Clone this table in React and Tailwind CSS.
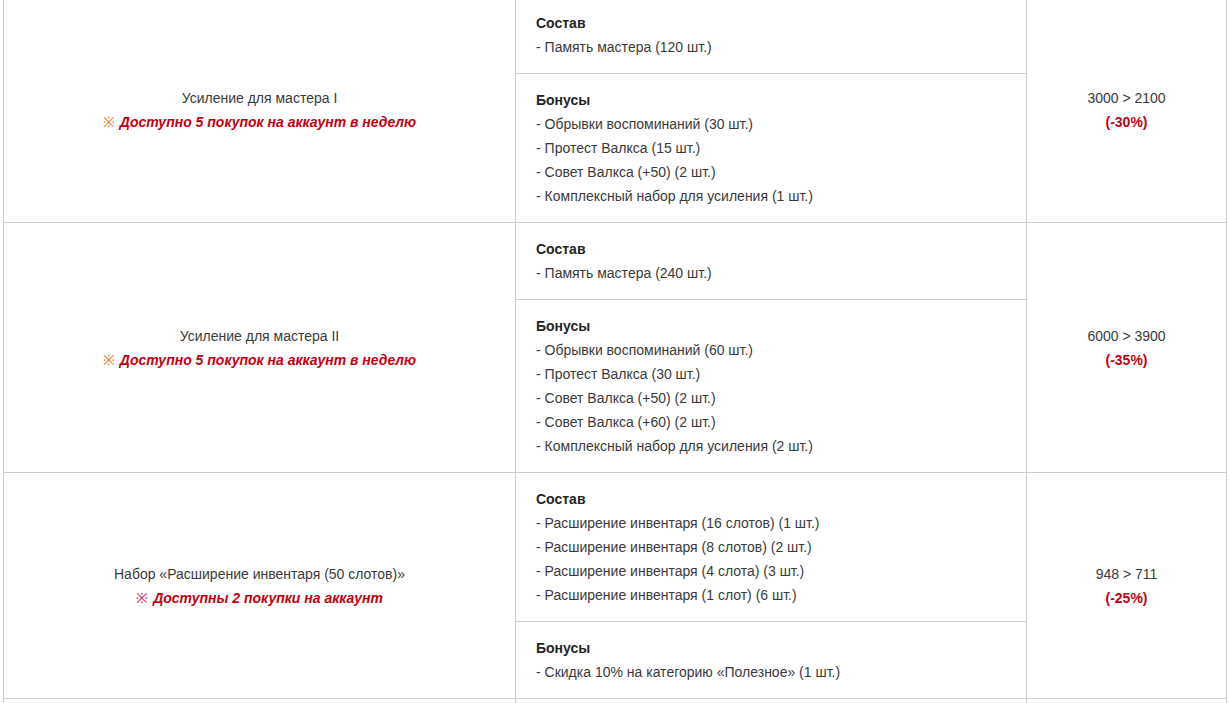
import React from "react";

const rows = [
  {
    name: "Усиление для мастера I",
    note: "Доступно 5 покупок на аккаунт в неделю",
    mark: "text-[#e0803c]",
    sostav: ["Память мастера (120 шт.)"],
    bonus: [
      "Обрывки воспоминаний (30 шт.)",
      "Протест Валкса (15 шт.)",
      "Совет Валкса (+50) (2 шт.)",
      "Комплексный набор для усиления (1 шт.)",
    ],
    price: "3000 > 2100",
    disc: "(-30%)",
  },
  {
    name: "Усиление для мастера II",
    note: "Доступно 5 покупок на аккаунт в неделю",
    mark: "text-[#e0803c]",
    sostav: ["Память мастера (240 шт.)"],
    bonus: [
      "Обрывки воспоминаний (60 шт.)",
      "Протест Валкса (30 шт.)",
      "Совет Валкса (+50) (2 шт.)",
      "Совет Валкса (+60) (2 шт.)",
      "Комплексный набор для усиления (2 шт.)",
    ],
    price: "6000 > 3900",
    disc: "(-35%)",
  },
  {
    name: "Набор «Расширение инвентаря (50 слотов)»",
    note: "Доступны 2 покупки на аккаунт",
    mark: "text-[#d6246a]",
    sostav: [
      "Расширение инвентаря (16 слотов) (1 шт.)",
      "Расширение инвентаря (8 слотов) (2 шт.)",
      "Расширение инвентаря (4 слота) (3 шт.)",
      "Расширение инвентаря (1 слот) (6 шт.)",
    ],
    bonus: ["Скидка 10% на категорию «Полезное» (1 шт.)"],
    price: "948 > 711",
    disc: "(-25%)",
  },
];

function Block({ title, items, top }) {
  return (
    <div className={"px-[20px] py-[14px] " + (top ? "border-t border-[#cccccc]" : "")}>
      <div className="font-bold text-[#252525]">{title}</div>
      {items.map((t, i) => (
        <div key={i}>- {t}</div>
      ))}
    </div>
  );
}

export default function App() {
  return (
    <div
      className="h-[703px] overflow-hidden bg-white text-[14px] leading-[24px] text-[#3a3a3a]"
      style={{ fontFamily: '"Liberation Sans", Arial, sans-serif' }}
    >
      <div className="ml-[3px] mt-[-4px] w-[1224px] border-x border-t border-[#cccccc]">
        {rows.map((r, i) => (
          <div key={i} className="flex border-b border-[#cccccc]">
            <div className="w-[512px] shrink-0 border-r border-[#cccccc] flex flex-col items-center justify-center text-center">
              <div>{r.name}</div>
              <div className="font-bold italic text-[#c4000f]">
                <span className={"font-normal not-italic mr-[5px] " + r.mark}>※</span>
                {r.note}
              </div>
            </div>
            <div className="w-[511px] shrink-0 border-r border-[#cccccc] flex flex-col">
              <Block title="Состав" items={r.sostav} />
              <Block title="Бонусы" items={r.bonus} top />
            </div>
            <div className="flex-1 flex flex-col items-center justify-center text-center">
              <div>{r.price}</div>
              <div className="font-bold text-[#c4000f]">{r.disc}</div>
            </div>
          </div>
        ))}
        <div className="flex h-[60px]">
          <div className="w-[512px] shrink-0 border-r border-[#cccccc]" />
          <div className="w-[511px] shrink-0 border-r border-[#cccccc]" />
          <div className="flex-1" />
        </div>
      </div>
    </div>
  );
}
